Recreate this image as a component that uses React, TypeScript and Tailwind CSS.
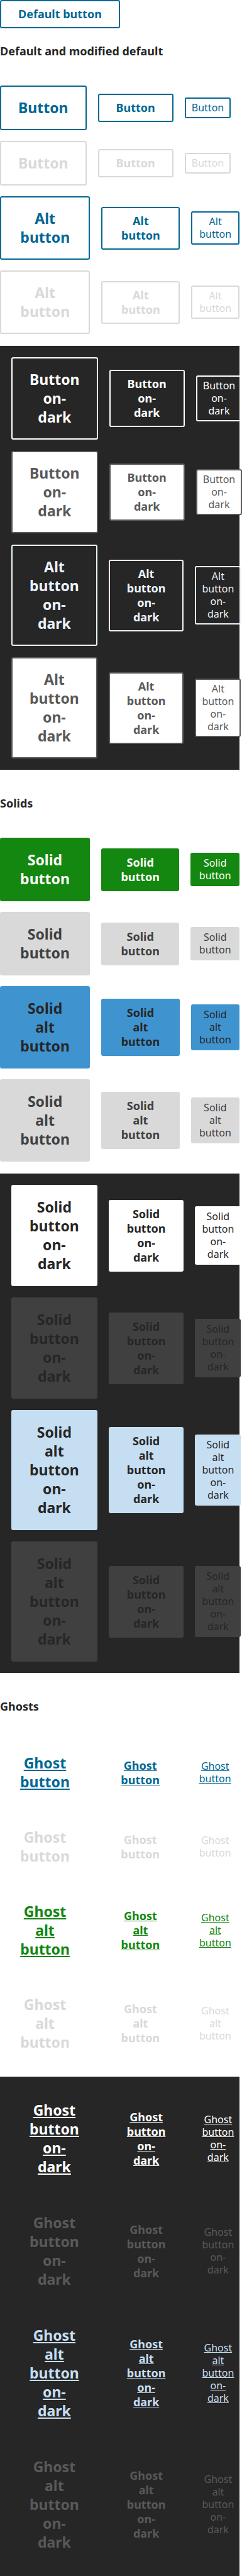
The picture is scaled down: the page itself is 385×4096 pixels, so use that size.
import type { ReactNode } from 'react';
import { clsx } from 'clsx';

type Size = 'large' | 'medium' | 'small';

const outlineSizes: Record<Size, string> = {
  large: 'px-[27px] pt-[18px] pb-[19px] text-[23px] leading-[30px] font-bold',
  medium: 'px-[27px] py-[9px] text-[18px] leading-[23px] font-bold',
  small: 'px-[9px] pt-1 pb-[5px] text-[16px] leading-5',
};

const plainSizes: Record<Size, string> = {
  large: 'px-[29px] pt-5 pb-[21px] text-[23px] leading-[30px] font-bold',
  medium: 'px-[29px] py-[11px] text-[18px] leading-[23px] font-bold',
  small: 'px-[11px] pt-1.5 pb-[7px] text-[16px] leading-5',
};

const looks = {
  outline: 'border-2 border-[#006794] text-[#006794]',
  outlineOff: 'border-2 border-[#d9d9d9] text-[#d9d9d9]',
  outlineDark: 'border-2 border-white text-white',
  outlineDarkAlt: 'border-2 border-[#ebf3fb] text-[#ebf3fb]',
  outlineDarkOff: 'border-2 border-[#595959] bg-white text-[#595959]',
  solid: 'bg-[#13870f] text-white',
  solidOff: 'bg-[#d9d9d9] text-[#404040]',
  solidAlt: 'bg-[#3f94d0] text-[#262626]',
  solidDark: 'bg-white text-[#262626]',
  solidDarkOff: 'bg-[#404040] text-[#262626]',
  solidDarkAlt: 'bg-[#c6def1] text-[#262626]',
  ghost: 'text-[#006794] underline',
  ghostOff: 'text-[#d9d9d9]',
  ghostAlt: 'text-[#13870f] underline',
  ghostDark: 'text-white underline',
  ghostDarkOff: 'text-[#595959]',
  ghostDarkAlt: 'text-[#c6def1] underline',
};

type Look = keyof typeof looks;

function Button({ look, size, label }: { look: Look; size: Size; label: string }) {
  const sizes = look.startsWith('outline') ? outlineSizes : plainSizes;
  return (
    <button
      type="button"
      disabled={look.endsWith('Off')}
      className={clsx('rounded-[3px] text-center', sizes[size], looks[look])}
    >
      {label}
    </button>
  );
}

function Row({ look, label, mediumLabel = label }: { look: Look; label: string; mediumLabel?: string }) {
  return (
    <div className="flex items-center gap-[18px]">
      <Button look={look} size="large" label={label} />
      <Button look={look} size="medium" label={mediumLabel} />
      <Button look={look} size="small" label={label} />
    </div>
  );
}

function Heading({ children }: { children: string }) {
  return <h2 className="mb-[43px] text-[18px] leading-6 font-bold text-[#262626]">{children}</h2>;
}

function Light({ children }: { children: ReactNode }) {
  return <div className="mb-[19px] flex flex-col gap-[17px]">{children}</div>;
}

function Dark({ children }: { children: ReactNode }) {
  return <div className="flex flex-col gap-[18px] bg-[#262626] p-[18px]">{children}</div>;
}

export default function App() {
  return (
    <main className="overflow-x-clip bg-white pr-1 font-['Noto_Sans',sans-serif]">
      <div className="mb-6 flex">
        <Button look="outline" size="medium" label="Default button" />
      </div>

      <section className="mb-[41px]">
        <Heading>Default and modified default</Heading>
        <Light>
          <Row look="outline" label="Button" />
          <Row look="outlineOff" label="Button" />
          <Row look="outline" label="Alt button" />
          <Row look="outlineOff" label="Alt button" />
        </Light>
        <Dark>
          <Row look="outlineDark" label="Button on-dark" />
          <Row look="outlineDarkOff" label="Button on-dark" />
          <Row look="outlineDarkAlt" label="Alt button on-dark" />
          <Row look="outlineDarkOff" label="Alt button on-dark" />
        </Dark>
      </section>

      <section className="mb-[41px]">
        <Heading>Solids</Heading>
        <Light>
          <Row look="solid" label="Solid button" />
          <Row look="solidOff" label="Solid button" />
          <Row look="solidAlt" label="Solid alt button" />
          <Row look="solidOff" label="Solid alt button" />
        </Light>
        <Dark>
          <Row look="solidDark" label="Solid button on-dark" />
          <Row look="solidDarkOff" label="Solid button on-dark" />
          <Row look="solidDarkAlt" label="Solid alt button on-dark" />
          <Row look="solidDarkOff" label="Solid alt button on-dark" mediumLabel="Solid button on-dark" />
        </Dark>
      </section>

      <section>
        <Heading>Ghosts</Heading>
        <Light>
          <Row look="ghost" label="Ghost button" />
          <Row look="ghostOff" label="Ghost button" />
          <Row look="ghostAlt" label="Ghost alt button" />
          <Row look="ghostOff" label="Ghost alt button" />
        </Light>
        <Dark>
          <Row look="ghostDark" label="Ghost button on-dark" />
          <Row look="ghostDarkOff" label="Ghost button on-dark" />
          <Row look="ghostDarkAlt" label="Ghost alt button on-dark" />
          <Row look="ghostDarkOff" label="Ghost alt button on-dark" />
        </Dark>
      </section>
    </main>
  );
}
